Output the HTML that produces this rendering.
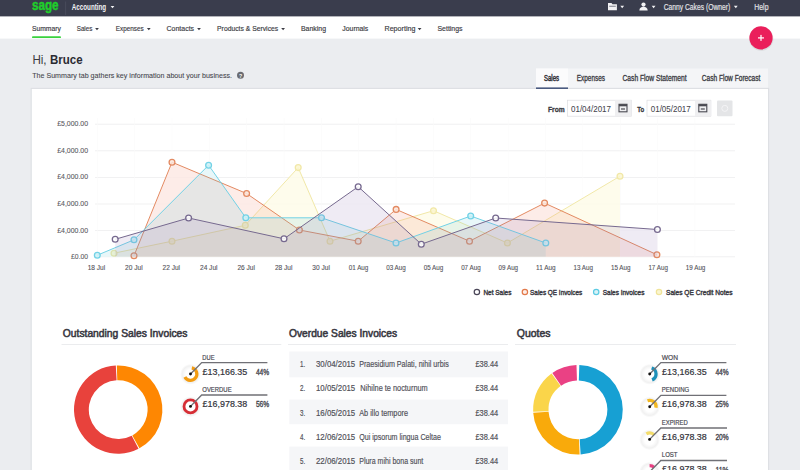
<!DOCTYPE html>
<html><head><meta charset="utf-8"><title>Summary</title>
<style>
html,body{margin:0;padding:0;width:800px;height:470px;overflow:hidden;background:#ebedf0;}
svg{display:block;font-family:"Liberation Sans", sans-serif;}
</style></head>
<body>
<svg width="800" height="470" viewBox="0 0 800 470">
<rect x="0" y="0" width="800" height="470" fill="#ebedf0"/>
<rect x="0" y="0" width="800" height="16.6" fill="#3a3d4d"/>
<rect x="0" y="16.6" width="800" height="22" fill="#ffffff"/>
<text x="32.00" y="10.40" font-size="14.04" font-weight="bold" fill="#1fcf2a" stroke="#1fcf2a" stroke-width="0.45" textLength="26.60" lengthAdjust="spacingAndGlyphs">sage</text>
<rect x="65.2" y="1.5" width="0.9" height="13.5" fill="#4a4d5c"/>
<text x="71.80" y="10.30" font-size="9.01" font-weight="bold" fill="#f2f2f4" textLength="34.40" lengthAdjust="spacingAndGlyphs">Accounting</text>
<path d="M110.60 5.95 L114.40 5.95 L112.50 8.23 Z" fill="#f2f2f4"/>
<path d="M608 3 h3.5 l1 1.2 h4.4 v6 h-8.9 z" fill="#f2f2f4"/>
<rect x="609.2" y="5.8" width="6.6" height="0.8" fill="#3a3d4d" opacity="0.8"/>
<path d="M620.30 5.85 L624.10 5.85 L622.20 8.13 Z" fill="#f2f2f4"/>
<circle cx="643.5" cy="4.6" r="2.1" fill="#f2f2f4"/>
<path d="M639.3 10.4 q0.4 -3.6 4.2 -3.6 q3.8 0 4.2 3.6 z" fill="#f2f2f4"/>
<path d="M651.70 5.85 L655.50 5.85 L653.60 8.13 Z" fill="#f2f2f4"/>
<text x="663.70" y="10.00" font-size="9.30" font-weight="normal" fill="#e4e4e8" stroke="#e4e4e8" stroke-width="0.18" textLength="66.50" lengthAdjust="spacingAndGlyphs">Canny Cakes (Owner)</text>
<path d="M733.90 5.85 L737.70 5.85 L735.80 8.13 Z" fill="#f2f2f4"/>
<text x="754.30" y="10.00" font-size="9.30" font-weight="normal" fill="#e4e4e8" stroke="#e4e4e8" stroke-width="0.18" textLength="14.20" lengthAdjust="spacingAndGlyphs">Help</text>
<text x="31.90" y="31.40" font-size="7.85" font-weight="normal" fill="#3c3c44" stroke="#3c3c44" stroke-width="0.18" textLength="28.90" lengthAdjust="spacingAndGlyphs">Summary</text>
<text x="76.70" y="31.40" font-size="7.85" font-weight="normal" fill="#3c3c44" stroke="#3c3c44" stroke-width="0.18" textLength="15.70" lengthAdjust="spacingAndGlyphs">Sales</text>
<text x="115.80" y="31.40" font-size="7.85" font-weight="normal" fill="#3c3c44" stroke="#3c3c44" stroke-width="0.18" textLength="28.00" lengthAdjust="spacingAndGlyphs">Expenses</text>
<text x="166.60" y="31.40" font-size="7.85" font-weight="normal" fill="#3c3c44" stroke="#3c3c44" stroke-width="0.18" textLength="27.50" lengthAdjust="spacingAndGlyphs">Contacts</text>
<text x="217.10" y="31.40" font-size="7.85" font-weight="normal" fill="#3c3c44" stroke="#3c3c44" stroke-width="0.18" textLength="61.10" lengthAdjust="spacingAndGlyphs">Products &amp; Services</text>
<text x="301.00" y="31.40" font-size="7.85" font-weight="normal" fill="#3c3c44" stroke="#3c3c44" stroke-width="0.18" textLength="25.00" lengthAdjust="spacingAndGlyphs">Banking</text>
<text x="342.30" y="31.40" font-size="7.85" font-weight="normal" fill="#3c3c44" stroke="#3c3c44" stroke-width="0.18" textLength="26.00" lengthAdjust="spacingAndGlyphs">Journals</text>
<text x="384.50" y="31.40" font-size="7.85" font-weight="normal" fill="#3c3c44" stroke="#3c3c44" stroke-width="0.18" textLength="30.90" lengthAdjust="spacingAndGlyphs">Reporting</text>
<text x="437.50" y="31.40" font-size="7.85" font-weight="normal" fill="#3c3c44" stroke="#3c3c44" stroke-width="0.18" textLength="25.00" lengthAdjust="spacingAndGlyphs">Settings</text>
<path d="M95.10 28.05 L98.90 28.05 L97.00 30.33 Z" fill="#3c3c44"/>
<path d="M146.90 28.05 L150.70 28.05 L148.80 30.33 Z" fill="#3c3c44"/>
<path d="M197.10 28.05 L200.90 28.05 L199.00 30.33 Z" fill="#3c3c44"/>
<path d="M281.20 28.05 L285.00 28.05 L283.10 30.33 Z" fill="#3c3c44"/>
<path d="M417.70 28.05 L421.50 28.05 L419.60 30.33 Z" fill="#3c3c44"/>
<rect x="32" y="36.3" width="29" height="1.8" fill="#3ad23e" rx="0.9"/>
<circle cx="761.2" cy="38.6" r="12.2" fill="#000" opacity="0.08"/>
<circle cx="761" cy="37.9" r="11.6" fill="#ea1f5b"/>
<rect x="758" y="37.3" width="6" height="1.2" fill="#fff"/>
<rect x="760.4" y="34.9" width="1.2" height="6" fill="#fff"/>
<text x="32.40" y="64.00" font-size="12.79" font-weight="normal" fill="#3a3a40" textLength="14.20" lengthAdjust="spacingAndGlyphs">Hi,</text>
<text x="50.00" y="64.00" font-size="12.79" font-weight="bold" fill="#2b2b33" textLength="32.60" lengthAdjust="spacingAndGlyphs">Bruce</text>
<text x="32.20" y="78.10" font-size="7.56" font-weight="normal" fill="#45454c" stroke="#45454c" stroke-width="0.08" textLength="199.80" lengthAdjust="spacingAndGlyphs">The Summary tab gathers key information about your business.</text>
<circle cx="240.5" cy="75.3" r="3.5" fill="#6a6c72"/>
<text x="240.6" y="77.6" font-size="5.2" font-weight="bold" fill="#fff" text-anchor="middle">?</text>
<rect x="536" y="68.5" width="232" height="20" fill="#f4f5f7"/>
<rect x="536" y="68.5" width="32" height="20" fill="#fbfbfc"/>
<text x="544.00" y="80.60" font-size="8.14" font-weight="normal" fill="#2e2e36" stroke="#2e2e36" stroke-width="0.45" textLength="15.00" lengthAdjust="spacingAndGlyphs">Sales</text>
<text x="576.80" y="80.60" font-size="8.14" font-weight="normal" fill="#3a3a42" stroke="#3a3a42" stroke-width="0.3" textLength="28.20" lengthAdjust="spacingAndGlyphs">Expenses</text>
<text x="622.50" y="80.60" font-size="8.14" font-weight="normal" fill="#3a3a42" stroke="#3a3a42" stroke-width="0.3" textLength="64.10" lengthAdjust="spacingAndGlyphs">Cash Flow Statement</text>
<text x="701.70" y="80.60" font-size="8.14" font-weight="normal" fill="#3a3a42" stroke="#3a3a42" stroke-width="0.3" textLength="58.70" lengthAdjust="spacingAndGlyphs">Cash Flow Forecast</text>
<rect x="31.2" y="88.4" width="737.4" height="390" fill="#ffffff" stroke="#dddfe3" stroke-width="1.1"/>
<rect x="536" y="87.4" width="32" height="1.6" fill="#4a5a80"/>
<text x="548.00" y="111.50" font-size="7.99" font-weight="bold" fill="#3a3a42" stroke="#3a3a42" stroke-width="0.3" textLength="16.70" lengthAdjust="spacingAndGlyphs">From</text>
<rect x="567.5" y="100.2" width="63.8" height="16" fill="#fff" stroke="#dcdde0" stroke-width="0.7"/>
<rect x="615" y="100.5" width="16.3" height="15.5" fill="#efeff1"/>
<text x="571.00" y="112.00" font-size="8.72" font-weight="normal" fill="#44444c" stroke="#44444c" stroke-width="0.05" textLength="40.00" lengthAdjust="spacingAndGlyphs">01/04/2017</text>
<text x="637.20" y="111.50" font-size="7.99" font-weight="bold" fill="#3a3a42" stroke="#3a3a42" stroke-width="0.3" textLength="7.00" lengthAdjust="spacingAndGlyphs">To</text>
<rect x="647" y="100.2" width="63.8" height="16" fill="#fff" stroke="#dcdde0" stroke-width="0.7"/>
<rect x="695" y="100.5" width="16.3" height="15.5" fill="#efeff1"/>
<text x="650.75" y="112.00" font-size="8.72" font-weight="normal" fill="#44444c" stroke="#44444c" stroke-width="0.05" textLength="40.00" lengthAdjust="spacingAndGlyphs">01/05/2017</text>
<rect x="619.0" y="104.3" width="8" height="7.5" fill="none" stroke="#4a4a52" stroke-width="1.1"/>
<rect x="619.0" y="104.3" width="8" height="2" fill="#4a4a52"/>
<rect x="621.0" y="108" width="4" height="2" fill="#4a4a52" opacity="0.6"/>
<rect x="698.8" y="104.3" width="8" height="7.5" fill="none" stroke="#4a4a52" stroke-width="1.1"/>
<rect x="698.8" y="104.3" width="8" height="2" fill="#4a4a52"/>
<rect x="700.8" y="108" width="4" height="2" fill="#4a4a52" opacity="0.6"/>
<rect x="717" y="100.5" width="15.5" height="15.8" fill="#e4e5e7" rx="1"/>
<circle cx="724.8" cy="108.4" r="3" fill="none" stroke="#f4f4f6" stroke-width="1"/>
<rect x="95" y="123.75" width="640" height="0.9" fill="#efeff0"/>
<rect x="95" y="150.35" width="640" height="0.9" fill="#efeff0"/>
<rect x="95" y="176.95" width="640" height="0.9" fill="#efeff0"/>
<rect x="95" y="203.55" width="640" height="0.9" fill="#efeff0"/>
<rect x="95" y="230.15" width="640" height="0.9" fill="#efeff0"/>
<rect x="95" y="256.35" width="640" height="0.9" fill="#efeff0"/>
<rect x="97.00" y="118" width="0.6" height="139" fill="#fafafa"/>
<rect x="134.35" y="118" width="0.6" height="139" fill="#fafafa"/>
<rect x="171.70" y="118" width="0.6" height="139" fill="#fafafa"/>
<rect x="209.05" y="118" width="0.6" height="139" fill="#fafafa"/>
<rect x="246.40" y="118" width="0.6" height="139" fill="#fafafa"/>
<rect x="283.75" y="118" width="0.6" height="139" fill="#fafafa"/>
<rect x="321.10" y="118" width="0.6" height="139" fill="#fafafa"/>
<rect x="358.45" y="118" width="0.6" height="139" fill="#fafafa"/>
<rect x="395.80" y="118" width="0.6" height="139" fill="#fafafa"/>
<rect x="433.15" y="118" width="0.6" height="139" fill="#fafafa"/>
<rect x="470.50" y="118" width="0.6" height="139" fill="#fafafa"/>
<rect x="507.85" y="118" width="0.6" height="139" fill="#fafafa"/>
<rect x="545.20" y="118" width="0.6" height="139" fill="#fafafa"/>
<rect x="582.55" y="118" width="0.6" height="139" fill="#fafafa"/>
<rect x="619.90" y="118" width="0.6" height="139" fill="#fafafa"/>
<rect x="657.25" y="118" width="0.6" height="139" fill="#fafafa"/>
<rect x="694.60" y="118" width="0.6" height="139" fill="#fafafa"/>
<text x="57.20" y="126.20" font-size="7.27" font-weight="normal" fill="#5a5a62" stroke="#5a5a62" stroke-width="0.1" textLength="30.90" lengthAdjust="spacingAndGlyphs">£5,000.00</text>
<text x="57.20" y="152.80" font-size="7.27" font-weight="normal" fill="#5a5a62" stroke="#5a5a62" stroke-width="0.1" textLength="30.90" lengthAdjust="spacingAndGlyphs">£4,000.00</text>
<text x="57.20" y="179.40" font-size="7.27" font-weight="normal" fill="#5a5a62" stroke="#5a5a62" stroke-width="0.1" textLength="30.90" lengthAdjust="spacingAndGlyphs">£4,000.00</text>
<text x="57.20" y="206.00" font-size="7.27" font-weight="normal" fill="#5a5a62" stroke="#5a5a62" stroke-width="0.1" textLength="30.90" lengthAdjust="spacingAndGlyphs">£4,000.00</text>
<text x="57.20" y="232.60" font-size="7.27" font-weight="normal" fill="#5a5a62" stroke="#5a5a62" stroke-width="0.1" textLength="30.90" lengthAdjust="spacingAndGlyphs">£4,000.00</text>
<text x="71.10" y="258.80" font-size="7.27" font-weight="normal" fill="#5a5a62" stroke="#5a5a62" stroke-width="0.1" textLength="17.00" lengthAdjust="spacingAndGlyphs">£0.00</text>
<text x="87.65" y="270.20" font-size="6.98" font-weight="normal" fill="#55555c" stroke="#55555c" stroke-width="0.12" textLength="17.50" lengthAdjust="spacingAndGlyphs">18 Jul</text>
<text x="125.10" y="270.20" font-size="6.98" font-weight="normal" fill="#55555c" stroke="#55555c" stroke-width="0.12" textLength="17.50" lengthAdjust="spacingAndGlyphs">20 Jul</text>
<text x="162.55" y="270.20" font-size="6.98" font-weight="normal" fill="#55555c" stroke="#55555c" stroke-width="0.12" textLength="17.50" lengthAdjust="spacingAndGlyphs">22 Jul</text>
<text x="200.00" y="270.20" font-size="6.98" font-weight="normal" fill="#55555c" stroke="#55555c" stroke-width="0.12" textLength="17.50" lengthAdjust="spacingAndGlyphs">24 Jul</text>
<text x="237.45" y="270.20" font-size="6.98" font-weight="normal" fill="#55555c" stroke="#55555c" stroke-width="0.12" textLength="17.50" lengthAdjust="spacingAndGlyphs">26 Jul</text>
<text x="274.90" y="270.20" font-size="6.98" font-weight="normal" fill="#55555c" stroke="#55555c" stroke-width="0.12" textLength="17.50" lengthAdjust="spacingAndGlyphs">28 Jul</text>
<text x="312.35" y="270.20" font-size="6.98" font-weight="normal" fill="#55555c" stroke="#55555c" stroke-width="0.12" textLength="17.50" lengthAdjust="spacingAndGlyphs">30 Jul</text>
<text x="348.80" y="270.20" font-size="6.98" font-weight="normal" fill="#55555c" stroke="#55555c" stroke-width="0.12" textLength="19.50" lengthAdjust="spacingAndGlyphs">01 Aug</text>
<text x="386.25" y="270.20" font-size="6.98" font-weight="normal" fill="#55555c" stroke="#55555c" stroke-width="0.12" textLength="19.50" lengthAdjust="spacingAndGlyphs">03 Aug</text>
<text x="423.70" y="270.20" font-size="6.98" font-weight="normal" fill="#55555c" stroke="#55555c" stroke-width="0.12" textLength="19.50" lengthAdjust="spacingAndGlyphs">05 Aug</text>
<text x="461.15" y="270.20" font-size="6.98" font-weight="normal" fill="#55555c" stroke="#55555c" stroke-width="0.12" textLength="19.50" lengthAdjust="spacingAndGlyphs">07 Aug</text>
<text x="498.60" y="270.20" font-size="6.98" font-weight="normal" fill="#55555c" stroke="#55555c" stroke-width="0.12" textLength="19.50" lengthAdjust="spacingAndGlyphs">09 Aug</text>
<text x="536.05" y="270.20" font-size="6.98" font-weight="normal" fill="#55555c" stroke="#55555c" stroke-width="0.12" textLength="19.50" lengthAdjust="spacingAndGlyphs">11 Aug</text>
<text x="573.50" y="270.20" font-size="6.98" font-weight="normal" fill="#55555c" stroke="#55555c" stroke-width="0.12" textLength="19.50" lengthAdjust="spacingAndGlyphs">13 Aug</text>
<text x="610.95" y="270.20" font-size="6.98" font-weight="normal" fill="#55555c" stroke="#55555c" stroke-width="0.12" textLength="19.50" lengthAdjust="spacingAndGlyphs">15 Aug</text>
<text x="648.40" y="270.20" font-size="6.98" font-weight="normal" fill="#55555c" stroke="#55555c" stroke-width="0.12" textLength="19.50" lengthAdjust="spacingAndGlyphs">17 Aug</text>
<text x="685.85" y="270.20" font-size="6.98" font-weight="normal" fill="#55555c" stroke="#55555c" stroke-width="0.12" textLength="19.50" lengthAdjust="spacingAndGlyphs">19 Aug</text>
<path d="M114.0 256.8 L114.0 253.2 L172.0 241.2 L245.3 225.3 L298.2 167.6 L330.0 241.2 L433.5 210.7 L507.4 243.0 L620.0 176.2 L620.0 256.8 Z" fill="#fff" opacity="0.8"/>
<path d="M134.0 256.8 L134.0 255.7 L172.0 162.2 L246.6 193.5 L299.4 230.0 L358.2 241.2 L396.1 209.4 L469.5 241.2 L544.6 203.1 L656.9 254.7 L656.9 256.8 Z" fill="#fff" opacity="0.8"/>
<path d="M97.3 256.8 L97.3 255.2 L134.0 239.8 L208.6 165.2 L245.8 217.8 L321.5 217.8 L396.0 243.0 L470.7 216.0 L545.8 243.0 L545.8 256.8 Z" fill="#fff" opacity="0.8"/>
<path d="M115.2 256.8 L115.2 239.3 L188.6 218.0 L284.0 238.8 L358.2 186.7 L421.3 244.2 L495.7 218.0 L657.4 229.5 L657.4 256.8 Z" fill="#fff" opacity="0.8"/>
<path d="M114.0 256.8 L114.0 253.2 L172.0 241.2 L245.3 225.3 L298.2 167.6 L330.0 241.2 L433.5 210.7 L507.4 243.0 L620.0 176.2 L620.0 256.8 Z" fill="rgba(250,236,130,0.15)"/>
<path d="M114.0 253.2 L172.0 241.2 L245.3 225.3 L298.2 167.6 L330.0 241.2 L433.5 210.7 L507.4 243.0 L620.0 176.2" fill="none" stroke="#f1e8a8" stroke-width="1.0"/>
<circle cx="114.0" cy="253.2" r="2.9" fill="#fbf6d0" fill-opacity="0.85" stroke="#f1e8a8" stroke-width="1.3"/>
<circle cx="172.0" cy="241.2" r="2.9" fill="#fbf6d0" fill-opacity="0.85" stroke="#f1e8a8" stroke-width="1.3"/>
<circle cx="245.3" cy="225.3" r="2.9" fill="#fbf6d0" fill-opacity="0.85" stroke="#f1e8a8" stroke-width="1.3"/>
<circle cx="298.2" cy="167.6" r="2.9" fill="#fbf6d0" fill-opacity="0.85" stroke="#f1e8a8" stroke-width="1.3"/>
<circle cx="330.0" cy="241.2" r="2.9" fill="#fbf6d0" fill-opacity="0.85" stroke="#f1e8a8" stroke-width="1.3"/>
<circle cx="433.5" cy="210.7" r="2.9" fill="#fbf6d0" fill-opacity="0.85" stroke="#f1e8a8" stroke-width="1.3"/>
<circle cx="507.4" cy="243.0" r="2.9" fill="#fbf6d0" fill-opacity="0.85" stroke="#f1e8a8" stroke-width="1.3"/>
<circle cx="620.0" cy="176.2" r="2.9" fill="#fbf6d0" fill-opacity="0.85" stroke="#f1e8a8" stroke-width="1.3"/>
<path d="M134.0 256.8 L134.0 255.7 L172.0 162.2 L246.6 193.5 L299.4 230.0 L358.2 241.2 L396.1 209.4 L469.5 241.2 L544.6 203.1 L656.9 254.7 L656.9 256.8 Z" fill="rgba(245,135,110,0.16)"/>
<path d="M134.0 255.7 L172.0 162.2 L246.6 193.5 L299.4 230.0 L358.2 241.2 L396.1 209.4 L469.5 241.2 L544.6 203.1 L656.9 254.7" fill="none" stroke="#e38a62" stroke-width="1.0"/>
<circle cx="134.0" cy="255.7" r="2.9" fill="#fbe6dc" fill-opacity="0.85" stroke="#e38a62" stroke-width="1.3"/>
<circle cx="172.0" cy="162.2" r="2.9" fill="#fbe6dc" fill-opacity="0.85" stroke="#e38a62" stroke-width="1.3"/>
<circle cx="246.6" cy="193.5" r="2.9" fill="#fbe6dc" fill-opacity="0.85" stroke="#e38a62" stroke-width="1.3"/>
<circle cx="299.4" cy="230.0" r="2.9" fill="#fbe6dc" fill-opacity="0.85" stroke="#e38a62" stroke-width="1.3"/>
<circle cx="358.2" cy="241.2" r="2.9" fill="#fbe6dc" fill-opacity="0.85" stroke="#e38a62" stroke-width="1.3"/>
<circle cx="396.1" cy="209.4" r="2.9" fill="#fbe6dc" fill-opacity="0.85" stroke="#e38a62" stroke-width="1.3"/>
<circle cx="469.5" cy="241.2" r="2.9" fill="#fbe6dc" fill-opacity="0.85" stroke="#e38a62" stroke-width="1.3"/>
<circle cx="544.6" cy="203.1" r="2.9" fill="#fbe6dc" fill-opacity="0.85" stroke="#e38a62" stroke-width="1.3"/>
<circle cx="656.9" cy="254.7" r="2.9" fill="#fbe6dc" fill-opacity="0.85" stroke="#e38a62" stroke-width="1.3"/>
<path d="M97.3 256.8 L97.3 255.2 L134.0 239.8 L208.6 165.2 L245.8 217.8 L321.5 217.8 L396.0 243.0 L470.7 216.0 L545.8 243.0 L545.8 256.8 Z" fill="rgba(95,200,215,0.14)"/>
<path d="M97.3 255.2 L134.0 239.8 L208.6 165.2 L245.8 217.8 L321.5 217.8 L396.0 243.0 L470.7 216.0 L545.8 243.0" fill="none" stroke="#72d2e6" stroke-width="1.0"/>
<circle cx="97.3" cy="255.2" r="2.9" fill="#cdf1f7" fill-opacity="0.85" stroke="#72d2e6" stroke-width="1.3"/>
<circle cx="134.0" cy="239.8" r="2.9" fill="#cdf1f7" fill-opacity="0.85" stroke="#72d2e6" stroke-width="1.3"/>
<circle cx="208.6" cy="165.2" r="2.9" fill="#cdf1f7" fill-opacity="0.85" stroke="#72d2e6" stroke-width="1.3"/>
<circle cx="245.8" cy="217.8" r="2.9" fill="#cdf1f7" fill-opacity="0.85" stroke="#72d2e6" stroke-width="1.3"/>
<circle cx="321.5" cy="217.8" r="2.9" fill="#cdf1f7" fill-opacity="0.85" stroke="#72d2e6" stroke-width="1.3"/>
<circle cx="396.0" cy="243.0" r="2.9" fill="#cdf1f7" fill-opacity="0.85" stroke="#72d2e6" stroke-width="1.3"/>
<circle cx="470.7" cy="216.0" r="2.9" fill="#cdf1f7" fill-opacity="0.85" stroke="#72d2e6" stroke-width="1.3"/>
<circle cx="545.8" cy="243.0" r="2.9" fill="#cdf1f7" fill-opacity="0.85" stroke="#72d2e6" stroke-width="1.3"/>
<path d="M115.2 256.8 L115.2 239.3 L188.6 218.0 L284.0 238.8 L358.2 186.7 L421.3 244.2 L495.7 218.0 L657.4 229.5 L657.4 256.8 Z" fill="rgba(142,115,175,0.14)"/>
<path d="M115.2 239.3 L188.6 218.0 L284.0 238.8 L358.2 186.7 L421.3 244.2 L495.7 218.0 L657.4 229.5" fill="none" stroke="#76698f" stroke-width="1.0"/>
<circle cx="115.2" cy="239.3" r="2.9" fill="#ffffff" fill-opacity="0.85" stroke="#76698f" stroke-width="1.3"/>
<circle cx="188.6" cy="218.0" r="2.9" fill="#ffffff" fill-opacity="0.85" stroke="#76698f" stroke-width="1.3"/>
<circle cx="284.0" cy="238.8" r="2.9" fill="#ffffff" fill-opacity="0.85" stroke="#76698f" stroke-width="1.3"/>
<circle cx="358.2" cy="186.7" r="2.9" fill="#ffffff" fill-opacity="0.85" stroke="#76698f" stroke-width="1.3"/>
<circle cx="421.3" cy="244.2" r="2.9" fill="#ffffff" fill-opacity="0.85" stroke="#76698f" stroke-width="1.3"/>
<circle cx="495.7" cy="218.0" r="2.9" fill="#ffffff" fill-opacity="0.85" stroke="#76698f" stroke-width="1.3"/>
<circle cx="657.4" cy="229.5" r="2.9" fill="#ffffff" fill-opacity="0.85" stroke="#76698f" stroke-width="1.3"/>
<circle cx="476.9" cy="292" r="2.7" fill="#fff" stroke="#4a4658" stroke-width="1.2"/>
<circle cx="524.9" cy="292" r="2.7" fill="#fdeee8" stroke="#e2794a" stroke-width="1.2"/>
<circle cx="596.2" cy="292" r="2.7" fill="#d8f3f8" stroke="#5ccbe3" stroke-width="1.2"/>
<circle cx="659" cy="292" r="2.7" fill="#faf5cf" stroke="#f0e49a" stroke-width="1.2"/>
<text x="483.40" y="294.60" font-size="7.56" font-weight="normal" fill="#3a3a42" stroke="#3a3a42" stroke-width="0.42" textLength="28.00" lengthAdjust="spacingAndGlyphs">Net Sales</text>
<text x="530.10" y="294.60" font-size="7.56" font-weight="normal" fill="#3a3a42" stroke="#3a3a42" stroke-width="0.42" textLength="52.20" lengthAdjust="spacingAndGlyphs">Sales QE Invoices</text>
<text x="602.75" y="294.60" font-size="7.56" font-weight="normal" fill="#3a3a42" stroke="#3a3a42" stroke-width="0.42" textLength="41.65" lengthAdjust="spacingAndGlyphs">Sales Invoices</text>
<text x="666.00" y="294.60" font-size="7.56" font-weight="normal" fill="#3a3a42" stroke="#3a3a42" stroke-width="0.42" textLength="66.50" lengthAdjust="spacingAndGlyphs">Sales QE Credit Notes</text>
<text x="62.80" y="337.00" font-size="10.76" font-weight="normal" fill="#38383f" stroke="#38383f" stroke-width="0.55" textLength="124.70" lengthAdjust="spacingAndGlyphs">Outstanding Sales Invoices</text>
<text x="289.00" y="337.00" font-size="10.76" font-weight="normal" fill="#38383f" stroke="#38383f" stroke-width="0.55" textLength="108.00" lengthAdjust="spacingAndGlyphs">Overdue Sales Invoices</text>
<text x="516.80" y="337.00" font-size="10.76" font-weight="normal" fill="#38383f" stroke="#38383f" stroke-width="0.55" textLength="33.80" lengthAdjust="spacingAndGlyphs">Quotes</text>
<rect x="61.5" y="344" width="219.8" height="0.9" fill="#e9eaec"/>
<rect x="288" y="344" width="220" height="0.9" fill="#e9eaec"/>
<rect x="515" y="344" width="221" height="0.9" fill="#e9eaec"/>
<path d="M116.81 365.42 A44.2 44.2 0 0 1 139.43 448.37 L132.32 435.39 A29.4 29.4 0 0 0 117.28 380.21 Z" fill="#fe8702"/>
<path d="M138.54 448.84 A44.2 44.2 0 1 1 115.81 365.46 L116.61 380.24 A29.4 29.4 0 1 0 131.73 435.70 Z" fill="#e8423c"/>
<path d="M579.31 365.02 A44.8 44.8 0 0 1 580.63 454.52 L579.69 439.15 A29.4 29.4 0 0 0 578.82 380.41 Z" fill="#17a0d3"/>
<path d="M579.62 454.57 A44.8 44.8 0 0 1 533.20 412.77 L548.56 411.75 A29.4 29.4 0 0 0 579.03 439.18 Z" fill="#f9aa0b"/>
<path d="M533.15 411.83 A44.8 44.8 0 0 1 551.57 373.56 L560.62 386.01 A29.4 29.4 0 0 0 548.53 411.13 Z" fill="#fad54a"/>
<path d="M552.33 373.01 A44.8 44.8 0 0 1 576.49 365.02 L576.98 380.41 A29.4 29.4 0 0 0 561.12 385.66 Z" fill="#ea4184"/>
<defs><radialGradient id="halo"><stop offset="0.45" stop-color="#000" stop-opacity="0"/><stop offset="0.8" stop-color="#000" stop-opacity="0.055"/><stop offset="1" stop-color="#000" stop-opacity="0"/></radialGradient></defs>
<circle cx="190.5" cy="374.3" r="10.5" fill="url(#halo)"/>
<path d="M192.16 366.17 A8.0 8.0 0 1 1 183.44 377.76 L186.35 376.21 A4.7 4.7 0 1 0 191.48 369.40 Z" fill="#f39c12"/>
<path d="M190.5 374.0 L201.70 362.60 L267.4 362.60" fill="none" stroke="#707076" stroke-width="1.35"/>
<circle cx="190.5" cy="374.0" r="1.45" fill="#111"/>
<text x="202.30" y="359.50" font-size="6.40" font-weight="normal" fill="#4a4a52" stroke="#4a4a52" stroke-width="0.18" textLength="12.20" lengthAdjust="spacingAndGlyphs">DUE</text>
<text x="202.60" y="374.50" font-size="8.28" font-weight="normal" fill="#33333b" stroke="#33333b" stroke-width="0.18" textLength="44.70" lengthAdjust="spacingAndGlyphs">£13,166.35</text>
<text x="255.90" y="374.60" font-size="8.14" font-weight="normal" fill="#46464e" stroke="#46464e" stroke-width="0.35" textLength="13.30" lengthAdjust="spacingAndGlyphs">44%</text>
<circle cx="190.5" cy="406.7" r="10.5" fill="url(#halo)"/>
<circle cx="190.5" cy="406.4" r="6.5" fill="none" stroke="#d62e35" stroke-width="2.8"/>
<path d="M190.5 406.4 L201.70 395.00 L267.4 395.00" fill="none" stroke="#707076" stroke-width="1.35"/>
<circle cx="190.5" cy="406.4" r="1.45" fill="#111"/>
<text x="202.30" y="391.90" font-size="6.40" font-weight="normal" fill="#4a4a52" stroke="#4a4a52" stroke-width="0.18" textLength="29.30" lengthAdjust="spacingAndGlyphs">OVERDUE</text>
<text x="202.60" y="406.90" font-size="8.28" font-weight="normal" fill="#33333b" stroke="#33333b" stroke-width="0.18" textLength="44.70" lengthAdjust="spacingAndGlyphs">£16,978.38</text>
<text x="255.90" y="407.00" font-size="8.14" font-weight="normal" fill="#46464e" stroke="#46464e" stroke-width="0.35" textLength="13.30" lengthAdjust="spacingAndGlyphs">56%</text>
<circle cx="649.7" cy="374.3" r="10.5" fill="url(#halo)"/>
<path d="M652.17 366.39 A8.0 8.0 0 0 1 652.70 381.42 L651.46 378.36 A4.7 4.7 0 0 0 651.15 369.53 Z" fill="#1e90b9"/>
<path d="M649.7 374.0 L660.90 362.60 L726.4 362.60" fill="none" stroke="#707076" stroke-width="1.35"/>
<circle cx="649.7" cy="374.0" r="1.45" fill="#111"/>
<text x="661.80" y="359.50" font-size="6.40" font-weight="normal" fill="#4a4a52" stroke="#4a4a52" stroke-width="0.18" textLength="16.20" lengthAdjust="spacingAndGlyphs">WON</text>
<text x="662.10" y="374.50" font-size="8.28" font-weight="normal" fill="#33333b" stroke="#33333b" stroke-width="0.18" textLength="44.70" lengthAdjust="spacingAndGlyphs">£13,166.35</text>
<text x="715.40" y="374.60" font-size="8.14" font-weight="normal" fill="#46464e" stroke="#46464e" stroke-width="0.35" textLength="13.30" lengthAdjust="spacingAndGlyphs">44%</text>
<circle cx="649.7" cy="407.0" r="10.5" fill="url(#halo)"/>
<path d="M646.96 399.18 A8.0 8.0 0 0 1 657.58 408.09 L654.33 407.52 A4.7 4.7 0 0 0 648.09 402.28 Z" fill="#f2b822"/>
<path d="M649.7 406.7 L660.90 395.30 L726.4 395.30" fill="none" stroke="#707076" stroke-width="1.35"/>
<circle cx="649.7" cy="406.7" r="1.45" fill="#111"/>
<text x="661.80" y="392.20" font-size="6.40" font-weight="normal" fill="#4a4a52" stroke="#4a4a52" stroke-width="0.18" textLength="27.40" lengthAdjust="spacingAndGlyphs">PENDING</text>
<text x="662.10" y="407.20" font-size="8.28" font-weight="normal" fill="#33333b" stroke="#33333b" stroke-width="0.18" textLength="44.70" lengthAdjust="spacingAndGlyphs">£16,978.38</text>
<text x="715.40" y="407.30" font-size="8.14" font-weight="normal" fill="#46464e" stroke="#46464e" stroke-width="0.35" textLength="13.30" lengthAdjust="spacingAndGlyphs">25%</text>
<circle cx="649.6" cy="439.7" r="10.5" fill="url(#halo)"/>
<path d="M645.60 432.47 A8.0 8.0 0 0 1 655.26 433.74 L652.92 436.08 A4.7 4.7 0 0 0 647.25 435.33 Z" fill="#f3dc6a"/>
<path d="M649.6 439.4 L660.80 428.00 L727 428.00" fill="none" stroke="#707076" stroke-width="1.35"/>
<circle cx="649.6" cy="439.4" r="1.45" fill="#111"/>
<text x="661.80" y="424.90" font-size="6.40" font-weight="normal" fill="#4a4a52" stroke="#4a4a52" stroke-width="0.18" textLength="25.90" lengthAdjust="spacingAndGlyphs">EXPIRED</text>
<text x="662.10" y="439.90" font-size="8.28" font-weight="normal" fill="#33333b" stroke="#33333b" stroke-width="0.18" textLength="44.70" lengthAdjust="spacingAndGlyphs">£16,978.38</text>
<text x="715.40" y="440.00" font-size="8.14" font-weight="normal" fill="#46464e" stroke="#46464e" stroke-width="0.35" textLength="13.30" lengthAdjust="spacingAndGlyphs">20%</text>
<circle cx="649.6" cy="472.2" r="10.5" fill="url(#halo)"/>
<path d="M649.60 463.90 A8.0 8.0 0 0 1 655.26 466.24 L652.92 468.58 A4.7 4.7 0 0 0 649.60 467.20 Z" fill="#e83f82"/>
<path d="M649.6 471.9 L660.80 460.50 L727 460.50" fill="none" stroke="#707076" stroke-width="1.35"/>
<circle cx="649.6" cy="471.9" r="1.45" fill="#111"/>
<text x="661.80" y="457.40" font-size="6.40" font-weight="normal" fill="#4a4a52" stroke="#4a4a52" stroke-width="0.18" textLength="15.70" lengthAdjust="spacingAndGlyphs">LOST</text>
<text x="662.10" y="472.40" font-size="8.28" font-weight="normal" fill="#33333b" stroke="#33333b" stroke-width="0.18" textLength="44.70" lengthAdjust="spacingAndGlyphs">£16,978.38</text>
<text x="715.40" y="472.50" font-size="8.14" font-weight="normal" fill="#46464e" stroke="#46464e" stroke-width="0.35" textLength="13.30" lengthAdjust="spacingAndGlyphs">11%</text>
<rect x="289.3" y="351.5" width="218.7" height="25.8" fill="#f5f6f8"/>
<rect x="289.3" y="399.6" width="218.7" height="24.6" fill="#f5f6f8"/>
<rect x="289.3" y="446.6" width="218.7" height="29.4" fill="#f5f6f8"/>
<text x="300.00" y="367.20" font-size="9.01" font-weight="normal" fill="#515159" stroke="#515159" stroke-width="0.18" textLength="5.20" lengthAdjust="spacingAndGlyphs">1.</text>
<text x="316.00" y="367.20" font-size="9.01" font-weight="normal" fill="#515159" stroke="#515159" stroke-width="0.18" textLength="39.20" lengthAdjust="spacingAndGlyphs">30/04/2015</text>
<text x="359.20" y="367.20" font-size="9.01" font-weight="normal" fill="#515159" stroke="#515159" stroke-width="0.18" textLength="89.60" lengthAdjust="spacingAndGlyphs">Praesidium Palati, nihil urbis</text>
<text x="475.40" y="367.20" font-size="9.01" font-weight="normal" fill="#515159" stroke="#515159" stroke-width="0.18" textLength="22.80" lengthAdjust="spacingAndGlyphs">£38.44</text>
<text x="300.00" y="391.40" font-size="9.01" font-weight="normal" fill="#515159" stroke="#515159" stroke-width="0.18" textLength="5.20" lengthAdjust="spacingAndGlyphs">2.</text>
<text x="316.00" y="391.40" font-size="9.01" font-weight="normal" fill="#515159" stroke="#515159" stroke-width="0.18" textLength="39.20" lengthAdjust="spacingAndGlyphs">10/05/2015</text>
<text x="360.30" y="391.40" font-size="9.01" font-weight="normal" fill="#515159" stroke="#515159" stroke-width="0.18" textLength="67.40" lengthAdjust="spacingAndGlyphs">Nihilne te nocturnum</text>
<text x="475.40" y="391.40" font-size="9.01" font-weight="normal" fill="#515159" stroke="#515159" stroke-width="0.18" textLength="22.80" lengthAdjust="spacingAndGlyphs">£38.44</text>
<text x="300.00" y="415.80" font-size="9.01" font-weight="normal" fill="#515159" stroke="#515159" stroke-width="0.18" textLength="5.20" lengthAdjust="spacingAndGlyphs">3.</text>
<text x="316.00" y="415.80" font-size="9.01" font-weight="normal" fill="#515159" stroke="#515159" stroke-width="0.18" textLength="39.20" lengthAdjust="spacingAndGlyphs">16/05/2015</text>
<text x="359.20" y="415.80" font-size="9.01" font-weight="normal" fill="#515159" stroke="#515159" stroke-width="0.18" textLength="48.80" lengthAdjust="spacingAndGlyphs">Ab illo tempore</text>
<text x="475.40" y="415.80" font-size="9.01" font-weight="normal" fill="#515159" stroke="#515159" stroke-width="0.18" textLength="22.80" lengthAdjust="spacingAndGlyphs">£38.44</text>
<text x="300.00" y="440.10" font-size="9.01" font-weight="normal" fill="#515159" stroke="#515159" stroke-width="0.18" textLength="5.20" lengthAdjust="spacingAndGlyphs">4.</text>
<text x="316.00" y="440.10" font-size="9.01" font-weight="normal" fill="#515159" stroke="#515159" stroke-width="0.18" textLength="39.20" lengthAdjust="spacingAndGlyphs">12/06/2015</text>
<text x="359.20" y="440.10" font-size="9.01" font-weight="normal" fill="#515159" stroke="#515159" stroke-width="0.18" textLength="81.80" lengthAdjust="spacingAndGlyphs">Qui ipsorum lingua Celtae</text>
<text x="475.40" y="440.10" font-size="9.01" font-weight="normal" fill="#515159" stroke="#515159" stroke-width="0.18" textLength="22.80" lengthAdjust="spacingAndGlyphs">£38.44</text>
<text x="300.00" y="464.00" font-size="9.01" font-weight="normal" fill="#515159" stroke="#515159" stroke-width="0.18" textLength="5.20" lengthAdjust="spacingAndGlyphs">5.</text>
<text x="316.00" y="464.00" font-size="9.01" font-weight="normal" fill="#515159" stroke="#515159" stroke-width="0.18" textLength="39.20" lengthAdjust="spacingAndGlyphs">22/06/2015</text>
<text x="359.20" y="464.00" font-size="9.01" font-weight="normal" fill="#515159" stroke="#515159" stroke-width="0.18" textLength="64.10" lengthAdjust="spacingAndGlyphs">Plura mihi bona sunt</text>
<text x="475.40" y="464.00" font-size="9.01" font-weight="normal" fill="#515159" stroke="#515159" stroke-width="0.18" textLength="22.80" lengthAdjust="spacingAndGlyphs">£38.44</text>
</svg>
</body></html>
